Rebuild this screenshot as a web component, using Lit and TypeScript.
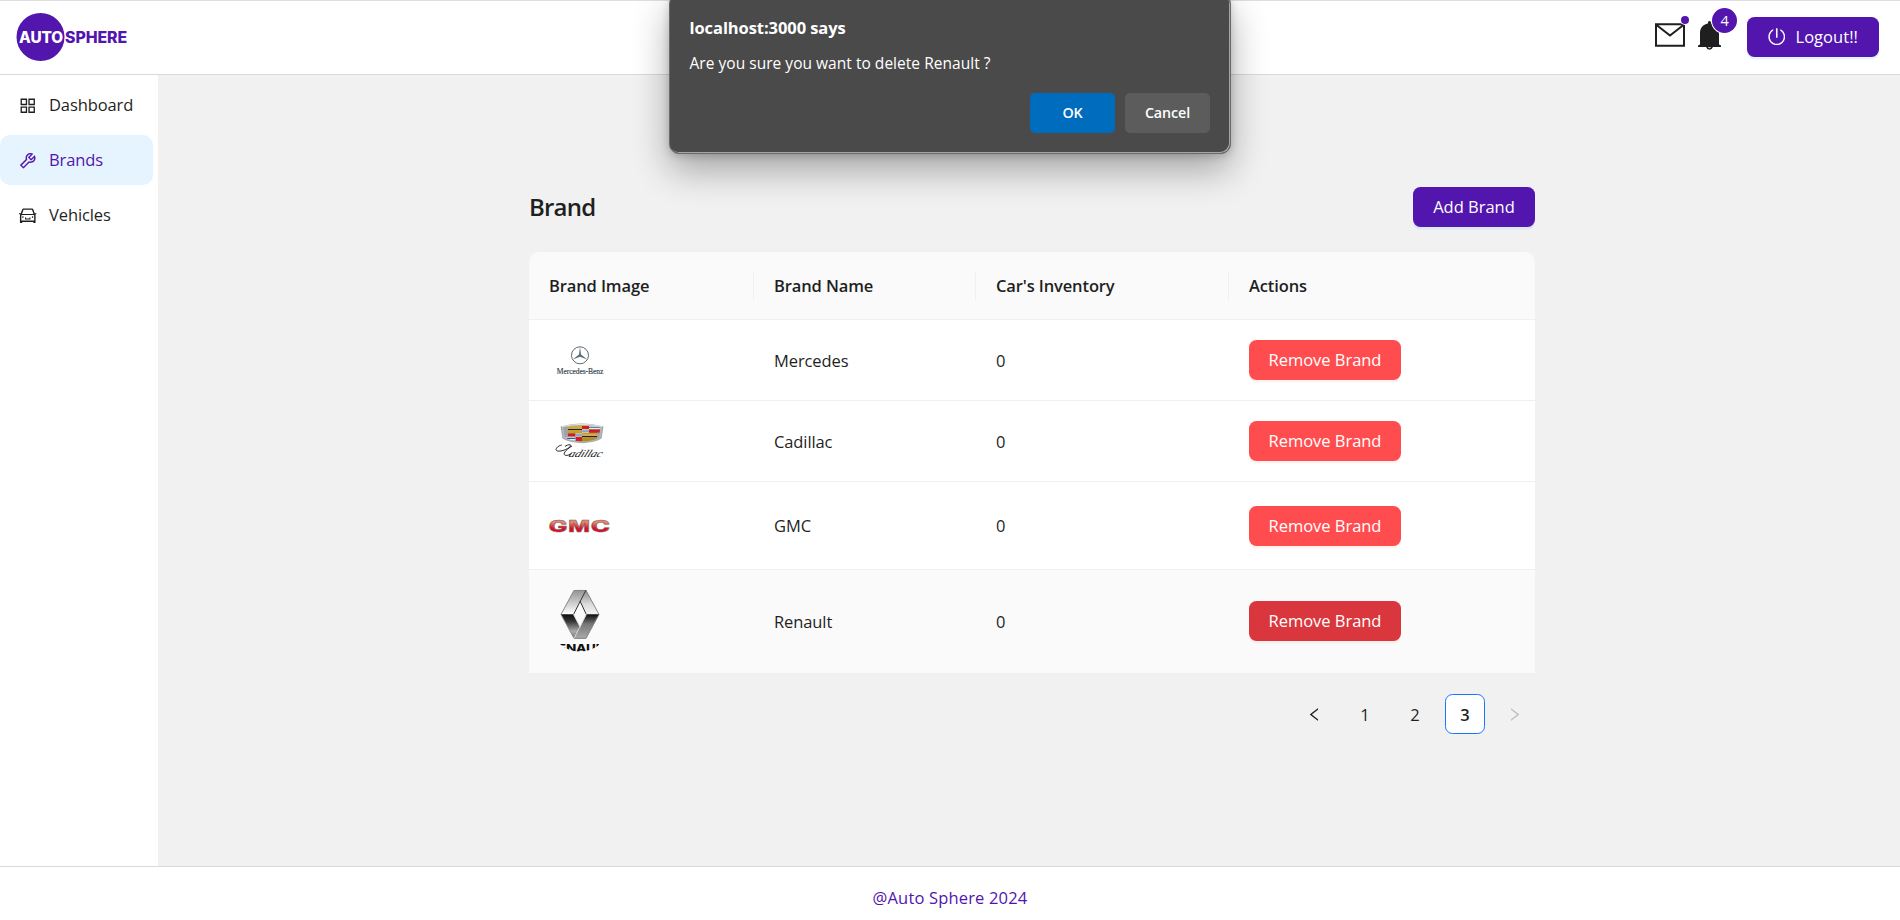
import { LitElement, html, svg, css } from "lit";
import { customElement } from "lit/decorators.js";
import { classMap } from "lit/directives/class-map.js";

const antIcon = (d: string) => html`<svg class="icon" viewBox="64 64 896 896" fill="currentColor"><path d=${d}></path></svg>`;

const APPSTORE = "M464 144H160c-8.8 0-16 7.2-16 16v304c0 8.8 7.2 16 16 16h304c8.8 0 16-7.2 16-16V160c0-8.8-7.2-16-16-16zm-52 268H212V212h200v200zm452-268H560c-8.8 0-16 7.2-16 16v304c0 8.8 7.2 16 16 16h304c8.8 0 16-7.2 16-16V160c0-8.8-7.2-16-16-16zm-52 268H612V212h200v200zM464 544H160c-8.8 0-16 7.2-16 16v304c0 8.8 7.2 16 16 16h304c8.8 0 16-7.2 16-16V560c0-8.8-7.2-16-16-16zm-52 268H212V612h200v200zm452-268H560c-8.8 0-16 7.2-16 16v304c0 8.8 7.2 16 16 16h304c8.8 0 16-7.2 16-16V560c0-8.8-7.2-16-16-16zm-52 268H612V612h200v200z";
const TOOL = "M876.6 239.5c-.5-.9-1.2-1.8-2-2.5-5-5-13.1-5-18.1 0L684.2 409.3l-67.9-67.9L788.7 169c.8-.8 1.4-1.6 2-2.5 3.6-6.1 1.6-13.9-4.5-17.5-98.2-58-226.8-44.7-311.3 39.7-67 67-89.2 162-66.5 247.4l-293 293c-3 3-2.8 7.9.3 11l169.7 169.7c3.1 3.1 8.1 3.3 11 .3l292.9-292.9c85.5 22.8 180.5.7 247.6-66.4 84.4-84.5 97.7-213.1 39.7-311.3zM786 499.8c-58.1 58.1-145.3 69.3-214.6 33.6l-8.8 8.8-.1-.1-274 274.1-79.2-79.2 230.1-230.1s0 .1.1.1l52.8-52.8c-35.7-69.3-24.5-156.5 33.6-214.6a184.2 184.2 0 01144-53.5L537 318.9a32.05 32.05 0 000 45.3l124.5 124.5a32.05 32.05 0 0045.3 0l132.8-132.8c3.7 51.8-14.4 104.8-53.6 143.9z";
const CAR = "M380 704h264c4.4 0 8-3.6 8-8v-84c0-4.4-3.6-8-8-8h-40c-4.4 0-8 3.6-8 8v36H428v-36c0-4.4-3.6-8-8-8h-40c-4.4 0-8 3.6-8 8v84c0 4.4 3.6 8 8 8zm340-123a40 40 0 1080 0 40 40 0 10-80 0zm239-167.6L935.3 372a8 8 0 00-10.9-2.9l-50.7 29.6-78.3-216.2a63.9 63.9 0 00-60.9-44.4H301.2c-34.7 0-65.5 22.4-76.2 55.5l-74.6 205.2-50.8-29.6a8 8 0 00-10.9 2.9L65 413.4c-2.2 3.8-.9 8.6 2.9 10.8l60.4 35.2-14.5 40c-1.2 3.2-1.8 6.6-1.8 10v348.2c0 15.7 11.8 28.4 26.3 28.4h67.6c12.3 0 23-9.3 25.6-22.3l7.7-37.7h545.6l7.7 37.7c2.7 13 13.3 22.3 25.6 22.3h67.6c14.5 0 26.3-12.7 26.3-28.4V509.4c0-3.4-.6-6.8-1.8-10l-14.5-40 60.3-35.2a8 8 0 003-10.8zM840 517v237H184V517l15.6-43h624.8l15.6 43zM292.7 218.1l.5-1.3.4-1.3c1.1-3.3 4.1-5.5 7.6-5.5h427.6l75.4 208H220l72.7-199.9zM224 581a40 40 0 1080 0 40 40 0 10-80 0z";
const POWER = "M705.6 124.9a8 8 0 00-11.6 7.2v64.2c0 5.5 2.9 10.6 7.5 13.6a352.2 352.2 0 0162.2 49.8c32.7 32.8 58.4 70.9 76.3 113.3a355 355 0 0127.9 138.7c0 48.1-9.4 94.8-27.9 138.7a355.92 355.92 0 01-76.3 113.3 353.06 353.06 0 01-113.2 76.4c-43.8 18.6-90.5 28-138.5 28s-94.7-9.4-138.5-28a353.06 353.06 0 01-113.2-76.4A355.92 355.92 0 01184 650.4a355 355 0 01-27.9-138.7c0-48.1 9.4-94.8 27.9-138.7 17.9-42.4 43.6-80.5 76.3-113.3 19-19 39.8-35.6 62.2-49.8 4.7-2.9 7.5-8.1 7.5-13.6V132c0-6-6.3-9.8-11.6-7.2C178.5 195.2 82 339.3 80 506.3 77.2 745.1 272.5 943.5 511.2 944c239 .5 432.8-193.3 432.8-432.4 0-169.2-97-315.7-238.4-386.7zM480 560h64c4.4 0 8-3.6 8-8V88c0-4.4-3.6-8-8-8h-64c-4.4 0-8 3.6-8 8v464c0 4.4 3.6 8 8 8z";
const LEFT = "M724 218.3V141c0-6.7-7.7-10.4-12.9-6.3L260.3 486.8a31.86 31.86 0 000 50.3l450.8 352.1c5.3 4.1 12.9.4 12.9-6.3v-77.3c0-4.9-2.3-9.6-6.1-12.6l-360-281 360-281.1c3.8-3 6.1-7.7 6.1-12.6z";
const RIGHT = "M765.7 486.8L314.9 134.7A7.97 7.97 0 00302 141v77.3c0 4.9 2.3 9.6 6.1 12.6l360 281.1-360 281.1c-3.9 3-6.1 7.7-6.1 12.6V883c0 6.7 7.7 10.4 12.9 6.3l450.8-352.1a31.96 31.96 0 000-50.4z";

const mercedes = svg`
  <circle cx="31" cy="26.3" r="8.5" fill="none" stroke="#5d6b75" stroke-width="1"/>
  <path d="M31 17.8l1 7.8 6.3 5-7.3-2.9-7.3 2.9 6.3-5z" fill="#5d6b75"/>
  <text x="7.8" y="44.6" font-family="'Liberation Serif', serif" font-size="8.2" fill="#33424d" stroke="#33424d" stroke-width=".15" textLength="46.5" lengthAdjust="spacingAndGlyphs">Mercedes-Benz</text>`;

const cadillac = svg`
  <defs>
    <clipPath id="crest"><path d="M14.6 17Q33 13.6 51.4 17L50 27Q47 30.6 33 31.6 19 30.6 16 27z"/></clipPath>
    <linearGradient id="gold" x2="0" y2="1"><stop offset="0" stop-color="#d3b24e"/><stop offset="1" stop-color="#a9821f"/></linearGradient>
  </defs>
  <path d="M12 16.8Q33 11 54 16.8L52.2 28.2Q48 31.6 33 32.8 18 31.6 13.8 28.2z" fill="#b4b8bc" stroke="#83888d" stroke-width=".6"/>
  <g clip-path="url(#crest)">
    <rect x="12" y="14" width="42" height="19" fill="url(#gold)"/>
    <path d="M12 19.5h21M33 26.5h20" stroke="#26241f" stroke-width="1.2"/>
    <path d="M33 25h20" stroke="#f0e6c0" stroke-width=".6"/>
    <path d="M33 16h7v3h-7zM40 19.5h13v3.2H40zM19 23.400h7.500v3H19zM26.500 26.700H33V31h-6.500z" fill="#c8202f"/>
    <path d="M40 16h13v3H40zM33 19.500h7v3h-7zM26.500 23.400H33v3.200h-6.500zM14 26.700h12.500v4H14z" fill="#e9eef4"/>
    <path d="M40 17.300h13M33 21h7M26.500 25H33M14 28.400h12.500" stroke="#2d5cae" stroke-width="1.100"/>
    <path d="M14 17h5v10h-5zM48 22.700h4v6h-4z" fill="#9da3a9"/>
  </g>
  <path d="M13 16.700Q33 12 53 16.700" stroke="#e2e4e6" stroke-width="1" fill="none"/>
  <path d="M16 36.500c2.300-2 6.500-2.400 5.700-.6-1 2.200-8 5.600-12.500 5.200-4.400-.5-1.500-5 3.600-6.100M23 36c-3 1.500-11 8-6.500 9.300 2.200.5 4.600-.7 6.400-2.300" stroke="#252525" stroke-width="1" fill="none"/>
  <text transform="translate(19 46.500) skewX(-24)" font-family="'Liberation Serif', serif" font-style="italic" font-size="10.500" fill="#1c1c1c" textLength="33" lengthAdjust="spacingAndGlyphs">adillac</text>`;

const gmc = svg`
  <defs><linearGradient id="red" x2="0" y2="1"><stop offset=".3" stop-color="#e5866f"/><stop offset=".6" stop-color="#d8102a"/><stop offset="1" stop-color="#d8102a"/></linearGradient></defs>
  <g font-family="Inter, sans-serif" font-weight="800" font-size="15.500" fill="url(#red)" stroke="#7d5f5c" stroke-width=".5">
    <text x="-.3" y="36.900" textLength="18.500" lengthAdjust="spacingAndGlyphs">G</text>
    <text x="19.300" y="36.900" textLength="21.500" lengthAdjust="spacingAndGlyphs">M</text>
    <text x="41.700" y="36.900" textLength="19" lengthAdjust="spacingAndGlyphs">C</text>
  </g>`;

const renault = svg`
  <defs>
    <clipPath id="round"><circle cx="31" cy="30.5" r="31"/></clipPath>
    <linearGradient id="rl" x2="0" y2="1"><stop offset="0" stop-color="#929292"/><stop offset=".25" stop-color="#c8c8c8"/><stop offset=".49" stop-color="#fff"/><stop offset=".51" stop-color="#111"/><stop offset=".64" stop-color="#333"/><stop offset=".85" stop-color="#aaa"/><stop offset="1" stop-color="#777"/></linearGradient>
    <linearGradient id="rr" x2="0" y2="1"><stop offset="0" stop-color="#888"/><stop offset=".3" stop-color="#ddd"/><stop offset=".49" stop-color="#f2f2f2"/><stop offset=".51" stop-color="#111"/><stop offset=".7" stop-color="#777"/><stop offset="1" stop-color="#aaa"/></linearGradient>
  </defs>
  <g clip-path="url(#round)">
    <path d="M25 0h12L50 24.500 37 48.500H25L12 24.500z" fill="url(#rl)"/>
    <path d="M37 0L50 24.500 37 48.500H25L37.500 24.500 31 11z" fill="url(#rr)"/>
    <path d="M25 .3h12L50 24.500 37 48.300H25L12 24.500z" fill="none" stroke="#888" stroke-width="1"/>
    <path d="M31 11.500L37.300 24.500 31 37.500 24.500 24.500z" fill="#fafafa"/>
    <path d="M37 0L24.500 24.500M31 11l6.300 13.500" stroke="#333" stroke-width="1" fill="none"/>
    <path d="M24.500 24.500L31 36.500M37.300 24.500L25 48.300" stroke="#ddd" stroke-width=".9" fill="none"/>
    <text x="0" y="62.300" font-family="Inter, sans-serif" font-weight="800" font-size="10.500" fill="#111" textLength="62" lengthAdjust="spacingAndGlyphs">RENAULT</text>
  </g>`;

const BRANDS = [
  { name: "Mercedes", count: 0, logo: mercedes, size: "" },
  { name: "Cadillac", count: 0, logo: cadillac, size: "" },
  { name: "GMC", count: 0, logo: gmc, size: "tall" },
  { name: "Renault", count: 0, logo: renault, size: "active" },
];

@customElement("app-root")
export class AppRoot extends LitElement {
  static styles = css`
    :host { display: block; height: 920px; overflow: hidden; position: relative; font-family: "Open Sans", "Noto Sans", sans-serif; font-size: 16.5px; letter-spacing: -0.1px; color: #1f1f1f; }
    * { box-sizing: border-box; }
    button { font: inherit; letter-spacing: inherit; border: 0; margin: 0; padding: 0 0 1px; display: flex; align-items: center; justify-content: center; color: #fff; height: 40px; border-radius: 7.5px; white-space: nowrap; }
    .page { height: 100%; display: grid; grid-template-rows: 75px 1fr 54px; background: #fff; }
    .header { border-top: 1px solid #dedede; border-bottom: 1px solid #d9d9d9; display: flex; align-items: center; justify-content: space-between; padding: 0 21px 0 16px; }
    .logo { width: 114px; height: 52px; display: block; margin-bottom: 1px; }
    .tools { display: flex; align-items: center; margin-bottom: 1px; }
    .glyph { display: block; position: relative; }
    .mail { width: 30px; height: 24px; margin: 0 13px 4px 0; }
    .bell { width: 23px; height: 30px; margin: 0 26px 3px 0; }
    .glyph svg { display: block; width: 100%; height: 100%; }
    .dot { position: absolute; width: 8px; height: 8px; border-radius: 50%; background: #5215ae; right: -4px; top: -7px; box-shadow: 0 0 0 1px #fff; }
    .badge { position: absolute; width: 25px; height: 25px; border-radius: 50%; background: #5215ae; color: #fff; font-size: 14.5px; line-height: 25px; text-align: center; left: 14px; top: -13px; box-shadow: 0 0 0 1px #fff; }
    .primary { background: #5215ae; box-shadow: 0 2.5px 0 rgba(5, 145, 255, 0.1); }
    .logout { width: 132px; gap: 10px; letter-spacing: 0.05px; }
    .icon { width: 17.5px; height: 17.5px; display: block; flex: none; }
    .body { display: grid; grid-template-columns: 158px 1fr; min-height: 0; }
    .menu { padding: 5px 5px 0 0; display: flex; flex-direction: column; gap: 5px; }
    .item { height: 50px; border-radius: 10px; display: flex; align-items: center; gap: 12.5px; padding: 0 0 1px 19px; }
    .item .icon { margin-top: 2px; }
    .item.on { background: #e6f4ff; color: #5215ae; }
    .main { background: #f1f1f1; padding: 112px 365px 0 371px; }
    .title { display: flex; justify-content: space-between; height: 40px; align-items: center; margin-bottom: 25px; }
    .title h1 { margin: 0; font-size: 24px; font-weight: 600; letter-spacing: -0.8px; line-height: 40px; }
    .add { width: 122px; letter-spacing: 0; }
    .row { display: grid; grid-template-columns: 225px 222px 253px 306px; align-items: center; height: 81px; background: #fff; border-bottom: 1px solid #f0f0f0; }
    .row.tall { height: 88px; }
    .row.active { height: 104px; padding-bottom: 1px; background: #fafafa; }
    .row.head { height: 68px; background: #fafafa; border-radius: 10px 10px 0 0; font-weight: 600; letter-spacing: -0.12px; }
    .cell { padding-left: 20px; }
    .head .cell { height: 28px; line-height: 28px; border-right: 1px solid #f0f0f0; }
    .head .cell:last-child { border: 0; }
    .brand { width: 62px; height: 62px; display: block; overflow: visible; }
    .remove { width: 152px; background: #ff4d4f; box-shadow: 0 2.5px 0 rgba(255, 38, 5, 0.06); letter-spacing: -0.03px; }
    .active .remove { background: #d9363e; }
    .pager { display: flex; justify-content: flex-end; gap: 10px; margin-top: 20px; }
    .pg { width: 40px; height: 40px; border-radius: 7.5px; display: flex; align-items: center; justify-content: center; }
    .pg .icon { width: 15px; height: 15px; margin-right: 2px; }
    .pg.cur { background: #fff; border: 1px solid #1677ff; font-weight: 600; }
    .pg.off { color: #bfbfbf; }
    .footer { border-top: 1px solid #d9d9d9; color: #5215ae; text-align: center; line-height: 62px; letter-spacing: 0.17px; }
    .dialog { position: absolute; left: 669px; top: -6px; width: 562px; height: 160px; background: #4a4a4a; color: #fff; border: 1px solid #6a6a6a; border-radius: 10px; box-shadow: inset -1px -1px 0 #a5a5a5, 0 16px 36px rgba(0, 0, 0, 0.32), 0 2px 8px rgba(0, 0, 0, 0.18); padding: 21px 20px 20px 19.5px; display: flex; flex-direction: column; }
    .origin { font-weight: 700; font-size: 16.5px; line-height: 24px; letter-spacing: -0.08px; }
    .message { font-size: 15.5px; line-height: 22px; margin-top: 12px; letter-spacing: 0.03px; }
    .actions { display: flex; justify-content: flex-end; gap: 10px; margin-top: auto; }
    .actions button { width: 85px; border-radius: 5px; background: #5c5c5c; font-size: 14.3px; font-weight: 600; }
    .actions .ok { background: #006cbe; }
  `;

  render() {
    return html`
      <div class="page">
        <header class="header">
          <svg class="logo" viewBox="0 0 114 52">
            <circle cx="24.500" cy="26" r="24" fill="#5215ae"></circle>
            <g font-family="Inter, sans-serif" font-weight="800" font-size="15.500">
              <text x="3" y="31.500" fill="#fff" textLength="44" lengthAdjust="spacingAndGlyphs">AUTO</text>
              <text x="49" y="31.500" fill="#5215ae" textLength="62" lengthAdjust="spacingAndGlyphs">SPHERE</text>
            </g>
          </svg>
          <div class="tools">
            <span class="glyph mail">
              <svg viewBox="0 0 30 24" fill="none" stroke="#1f1f1f" stroke-width="2"><path d="M1 1.200h28v21.600H1zM1.500 2L15 12.500 28.500 2"></path></svg>
              <i class="dot"></i>
            </span>
            <span class="glyph bell">
              <svg viewBox="0 0 23 30" fill="#1f1f1f"><path d="M11.500 0c1 0 1.600.8 1.600 2.500 4.900.8 7.900 4.600 7.900 9.500v11.500l2 1V26h-8.100a3.500 3.500 0 01-6.800 0H0v-1.500l2-1V12c0-4.900 3-8.700 7.900-9.500C9.900.8 10.500 0 11.500 0zM9.900 26.200a1.700 1.700 0 003.200 0z"></path></svg>
              <span class="badge">4</span>
            </span>
            <button class="primary logout">${antIcon(POWER)}<span>Logout!!</span></button>
          </div>
        </header>
        <div class="body">
          <nav class="menu">
            <div class="item">${antIcon(APPSTORE)}<span>Dashboard</span></div>
            <div class="item on">${antIcon(TOOL)}<span>Brands</span></div>
            <div class="item">${antIcon(CAR)}<span>Vehicles</span></div>
          </nav>
          <main class="main">
            <div class="title"><h1>Brand</h1><button class="primary add">Add Brand</button></div>
            <div class="row head">
              ${["Brand Image", "Brand Name", "Car's Inventory", "Actions"].map((t) => html`<div class="cell">${t}</div>`)}
            </div>
            ${BRANDS.map((b) => html`
              <div class=${classMap({ row: true, tall: b.size === "tall", active: b.size === "active" })}>
                <div class="cell"><svg class="brand" viewBox="0 0 62 62">${b.logo}</svg></div>
                <div class="cell">${b.name}</div>
                <div class="cell">${b.count}</div>
                <div class="cell"><button class="remove">Remove Brand</button></div>
              </div>`)}
            <div class="pager">
              <span class="pg">${antIcon(LEFT)}</span>
              <span class="pg">1</span>
              <span class="pg">2</span>
              <span class="pg cur">3</span>
              <span class="pg off">${antIcon(RIGHT)}</span>
            </div>
          </main>
        </div>
        <footer class="footer">@Auto Sphere 2024</footer>
      </div>
      <div class="dialog" role="alertdialog">
        <div class="origin">localhost:3000 says</div>
        <div class="message">Are you sure you want to delete Renault ?</div>
        <div class="actions"><button class="ok">OK</button><button>Cancel</button></div>
      </div>
    `;
  }
}
